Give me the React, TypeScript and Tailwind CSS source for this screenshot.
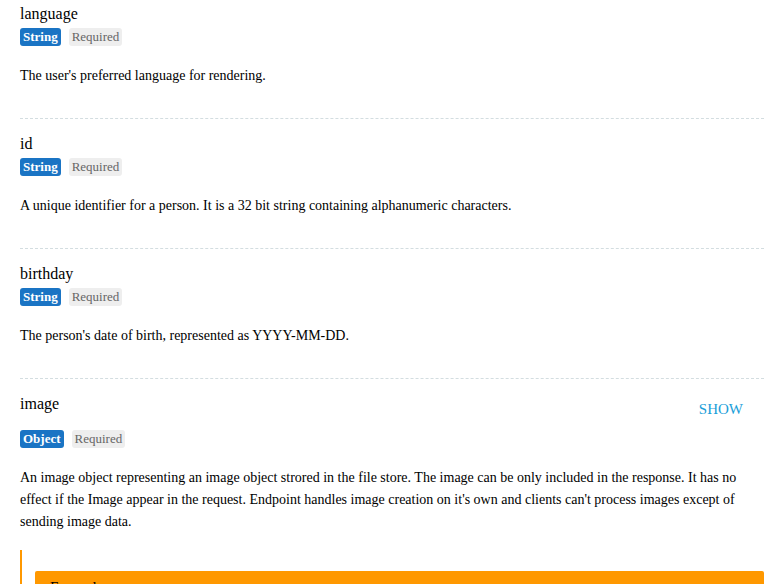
import React from "react";

type Item = { name: string; type: string; desc: string; show?: boolean };

const items: Item[] = [
  { name: "language", type: "String", desc: "The user's preferred language for rendering." },
  { name: "id", type: "String", desc: "A unique identifier for a person. It is a 32 bit string containing alphanumeric characters." },
  { name: "birthday", type: "String", desc: "The person's date of birth, represented as YYYY-MM-DD." },
];

function Badges({ type }: { type: string }) {
  return (
    <div className="flex gap-[8px]">
      <span className="bg-[#1a74c4] text-white font-bold text-[13px] leading-[14px] px-[3px] py-[2px] rounded-[3px]">{type}</span>
      <span className="bg-[#eeeeee] text-[#666666] text-[13px] leading-[14px] px-[3px] py-[2px] rounded-[3px]">Required</span>
    </div>
  );
}

export default function App() {
  return (
    <div className="w-[784px] h-[584px] overflow-hidden bg-white text-black font-['Liberation_Serif','Times_New_Roman',serif]">
      <div className="mx-[20px] -mt-[11px]">
        {items.map((it) => (
          <div key={it.name} className="pt-[16px] pb-[31px] border-b border-dashed border-[#d3dde0]">
            <div className="text-[16px] leading-[18px]">{it.name}</div>
            <div className="mt-[5px]"><Badges type={it.type} /></div>
            <p className="mt-[19px] text-[14px] leading-[22px]">{it.desc}</p>
          </div>
        ))}
        <div className="pt-[16px]">
          <div className="flex items-start justify-between">
            <div className="text-[16px] leading-[18px]">image</div>
            <button className="text-[#1a9ed9] text-[15px] leading-[17px] px-[21px] py-[7px] -mt-[1px] uppercase">Show</button>
          </div>
          <div className="mt-[5px]"><Badges type="Object" /></div>
          <p className="mt-[19px] text-[14px] leading-[22px]">
            An image object representing an image object strored in the file store. The image can be only included in the response. It has no effect if the Image appear in the request. Endpoint handles image creation on it's own and clients can't process images except of sending image data.
          </p>
          <div className="mt-[17px] border-l-[2px] border-[#ff9800] pl-[13px] pt-[21px]">
            <div className="bg-[#ff9800] rounded-[2px] px-[15px] pt-[7px] pb-[10px] text-[15px] leading-[18px]">Example</div>
          </div>
        </div>
      </div>
    </div>
  );
}
